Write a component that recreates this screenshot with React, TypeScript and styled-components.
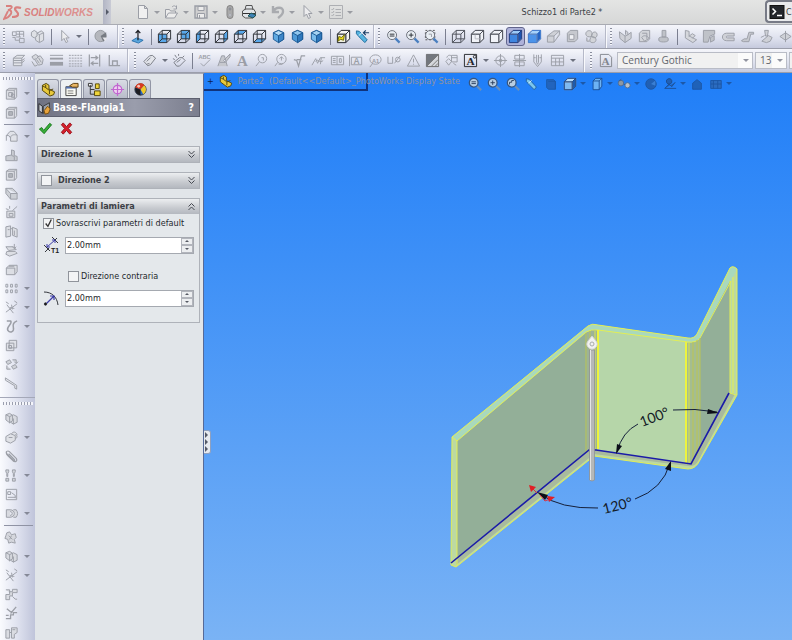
import React, { ReactNode } from "react";
import styled, { createGlobalStyle, css } from "styled-components";

const ui = `"DejaVu Sans Condensed", "DejaVu Sans", sans-serif`;

const GlobalStyle = createGlobalStyle`
  * { box-sizing: border-box; }
  body { margin: 0; font-family: ${ui}; font-size: 9px; color: #3c3f45; }
  button { font: inherit; color: inherit; padding: 0; border: 0; background: none; }
`;

/* ---------- glyphs ---------- */

const G = "#9b9ea6";
const D = "#2a2d33";

type Face = "front" | "back" | "left" | "right" | "top" | "bottom";
const facePaths: Record<Face, string> = {
  front: "M1.5 5.5h9v9h-9z",
  back: "M5.5 1.5h9v9h-9z",
  left: "M1.5 5.5l4-4v9l-4 4z",
  right: "M10.5 5.5l4-4v9l-4 4z",
  top: "M1.5 5.5l4-4h9l-4 4z",
  bottom: "M1.5 14.5l4-4h9l-4 4z",
};

const wireCube = (face?: Face, stroke = D) => (
  <>
    {face && <path d={facePaths[face]} fill="#5aa8ea" stroke="none" />}
    <path d="M1.5 5.5h9v9h-9zM1.5 5.5l4-4h9v9l-4 4M10.5 5.5l4-4M5.5 1.5v9h9M5.5 10.5l-4 4" stroke={stroke} />
  </>
);
const solidCube = (front: string, side: string, top: string, stroke: string) => (
  <>
    <path d={facePaths.front} fill={front} />
    <path d={facePaths.right} fill={side} />
    <path d={facePaths.top} fill={top} />
    <path d="M1.5 5.5h9v9h-9zM1.5 5.5l4-4h9v9l-4 4M10.5 5.5l4-4" stroke={stroke} />
  </>
);
const isoCube = (a: string, b: string, c: string) => (
  <g stroke="#1c5a94">
    <path d="M8 1.5l5.5 2.5v7L8 14.5 2.500 11V4z" fill={a} />
    <path d="M8 7v7.500l5.500-3.500V4z" fill={b} />
    <path d="M8 1.500L2.500 4 8 7l5.500-3z" fill={c} />
  </g>
);
const lens = (inner: ReactNode, stroke = "#666b75", handle = "#4a7fc0") => (
  <>
    <path d="M10 10l4.500 4.500" stroke={handle} strokeWidth="2.400" />
    <circle cx="6.500" cy="6.500" r="4.800" fill="#e9eef4" stroke={stroke} />
    {inner}
  </>
);
const hudLens = (inner: ReactNode) => (
  <>
    <path d="M10 10l5 5" stroke="#6b8fb8" strokeWidth="2.600" />
    <circle cx="6.500" cy="6.500" r="5" fill="#b7cde2" stroke="#37557e" strokeWidth="1.400" />
    {inner}
  </>
);

const glyphs: Record<string, ReactNode> = {
  doc: <path d="M3.500 1.500h6l3 3v10h-9zM9.500 1.500v3h3" fill="#f0f0f0" />,
  open: <path d="M1.500 14V5.500h4l1 1.500h5v2M1.500 14l3-5h9l-3 5zM8 3c2-2 4-1 4.500 1M12.500 1.500V5H9.500" fill="#ececec" />,
  save: <><path d="M2 2h12v12H2z" fill="#cfcfd0" strokeWidth="1.400" /><path d="M5 2.500h6v4H5zM4.500 9.500h7v4.500h-7zM6.500 11v3" fill="#ececec" /></>,
  capsule: <><rect x="5" y="1.500" width="6" height="13" rx="3" fill="#a9a9a9" stroke="#858585" /><circle cx="8" cy="5" r="1.200" fill="#777" /><circle cx="8" cy="11" r="1.200" fill="#eee" /></>,
  print: <><path d="M4 6l1-4.500h6L12 6M1.500 7l3-2h8l2 3v4l-3 2H4.500l-3-2z" fill="#e2e5e8" stroke="#555" /><path d="M2 9.500h12" stroke="#333" /><path d="M7 12l3-3 5 2-3 3z" fill="#3f83b8" stroke="#255" /></>,
  undo: <path d="M3 2v6h6M3.500 7.500c2-5 10-5 9.500 0 0 3-3 5-5 6.500" strokeWidth="2.400" stroke="#a9abaf" />,
  cursor: <path d="M5 1.500v11l2.500-2.500 2 4.500 2-1-2-4H13z" fill="#ececee" />,
  list: <path d="M1.500 1.500h13v13h-13zM3.500 5l1 1 1.500-2M7.500 5.500H13M3.500 8l1 1L6 7M7.500 8.500H13M3.500 11l1 1L6 10M7.500 11.500H13" stroke="#adafb3" />,
  sheet: <path d="M1.500 3h4v4h-4zM5.500 2.500h8v6M5.500 5.500h8M5.500 8.500h5M9 2.500v6M1.500 9h3v3h4M9 10h5v4.500H9z" />,
  cubes: <path d="M1.500 3.500l3-2 3 2v4l-3 2-3-2zM7.500 4.500L12 2l2.500 2v8L10 14.500 6 12V9M10 6v8M7.500 4.500L10 6l4.500-2" fill="#dfe1e6" />,
  ball: <><circle cx="7" cy="7.500" r="6" fill="#b5b7bd" stroke="#94979e" /><path d="M7 7.500l6-4v6l-3 4z" fill="#777b82" stroke="none" /><path d="M9 9h5l-2 4z" fill="#e6e6ea" stroke="none" /></>,
  normal: <><path d="M2 12.500l5-3 7 2.500-5 3z" fill="#5aa7df" stroke="#2b71ac" /><path d="M8.500 12V2M6 4.500L8.500 1.500 11 4.500" stroke="#1b1d22" strokeWidth="1.300" /></>,
  cFront: wireCube("front"), cBack: wireCube("back"), cLeft: wireCube("left"), cRight: wireCube("right"), cTop: wireCube("top"), cBottom: wireCube("bottom"),
  iso1: isoCube("#5fa9e2", "#3d86c8", "#b6dcf6"), iso2: isoCube("#4e9ad8", "#2f78bd", "#90c6ee"), iso3: isoCube("#7abceb", "#2f78bd", "#a5d2f1"),
  section: <>{solidCube("#f0efe0", "#f6f6f2", "#f6f6f2", D)}<path d="M2 13l1-5 3 1 3-3-1 6-3-1z" fill="#eedd1c" stroke="#6b6708" /></>,
  brush: <><path d="M1.500 2l3 .5 3 3 5.500 6-2.500 3-6-6-3-3.500z" fill="#57b4e0" stroke="#1d6b9c" /><path d="M4 7l3.500-3" stroke="#e3f3fb" /><path d="M15 4H9.500m2-2.500L9 4l2.500 2.500" stroke="#1c3f66" strokeWidth="1.300" /></>,
  hudBrush: <><path d="M1.500 2l3 .5 3 3 5.500 6-2.500 3-6-6-3-3.500z" fill="#7cc6ec" stroke="#1d5b9c" /><path d="M4 7l3.500-3" stroke="#e3f3fb" /></>,
  zoomFit: lens(<path d="M4 5.500h5M4 7.500h5" stroke={D} />),
  zoomIn: lens(<path d="M6.500 4v5M4 6.500h5" stroke={D} />),
  zoomArea: <><path d="M1.500 1.500h10v10h-10z" strokeDasharray="2 2" stroke="#555" />{lens(<path d="M5 5.500h3v3" stroke={G} />)}</>,
  hudFit: hudLens(<path d="M4 5.500h5M4 7.500h5" stroke="#273a57" />),
  hudZoom: hudLens(<path d="M6.500 4v5M4 6.500h5" stroke="#273a57" />),
  hudArea: hudLens(<path d="M4 8.500V6h2.500V4H9" stroke="#273a57" />),
  wire: wireCube(undefined, "#4b4e56"),
  hiddenGrey: <>{solidCube("#f1f3f8", "#f1f3f8", "#f1f3f8", "#4b4e56")}<path d="M5.500 6v4.500h5" stroke="#b6b9c1" /></>,
  hidden: solidCube("#f1f3f8", "#f1f3f8", "#f1f3f8", "#4b4e56"),
  shadedEdge: solidCube("#3f86e0", "#1d54b0", "#9bcaf8", "#173a86"),
  shaded: solidCube("#4b93ea", "#2464c4", "#a5d2fb", "#3a7ad4"),
  slab: <path d="M1.500 7.500h7v6.500h-7zM1.500 7.500l7-5.500h6l-6 5.500M14.500 2v4l-6 8" fill="#cfd1d7" />,
  boxGrey: <><path d="M2.500 4.500l3-3h8v9l-3 3h-8z" fill="#c6c8ce" /><path d="M4.500 6h5v5h-5z" fill="#f0f1f4" /></>,
  swirl: <path d="M8 8c-6 2-8-4-4-6 3-1 6 1 4 6zM8 8c0-6 6-6 6-2s-4 4-6 2zM8 8c6 0 6 6 2 6.500S5 12 8 8zM3 9v4h3" fill="#d2d4d9" />,
  leaf: <path d="M1.500 3l6 4.500v7L2 10zM7.500 14.500L14 10V3.500l-4 3-2.500 1M8 6V1.500l2.500 2v3" fill="#cfd1d7" />,
  shell: <path d="M2.500 4.500l3-3h8v9l-3 3h-8zM5.500 4.500h5v6M5 9c2-3 6-2 8 1l-5 3z" fill="#d3d5da" />,
  boss: <path d="M6.500 1.500h4v7h-4zM3 10c0-2 10-2 10 0v2c0 2.500-10 2.500-10 0z" fill="#bfc2c8" />,
  flange1: <path d="M2.500 1.500v8l8 5 4-3-8-4v-5zM6 8l4-3 3 2-3 3" fill="#d5d7dc" />,
  flange2: <path d="M1.500 1.500h12v4l-5 2-2 6.500h-5zM9 9l4-2v5l-4 2z" fill="#bfc2c8" />,
  hem: <path d="M14 4.500H6c-6 0-6 8 0 8h8v-3H7c-2 0-2-2 0-2h7z" fill="#cfd1d7" />,
  jog: <path d="M1.500 12.500l3-2h3l2-7h5v2h-3l-2 8h-6z" fill="#c6c8ce" />,
  form: <path d="M6 1.500h4l-1 6H7zM2 9l4-2M10 7l4 2-2 4-4 1.500L3 13z" fill="#cfd1d7" />,
  unfold: <path d="M2 8l6-4v8zM8 4l6 4-6 4M8 2v12" fill="#cfd1d7" />,
  stack: <path d="M2.500 5.500l4-3h8l-3 3v8h-9zM2.500 8h9l3-2M2.500 10.500h9l3-2.500M2.500 5.500h9" fill="#e1e3e8" />,
  edit: <path d="M2 4l4-2.500 3 2-2 2.500-3 1zM5 7l4 6 4-1 1-5-3-4-3 1M7 7l3 4M9 5l3 5M2 9l3 5 3-1" fill="#d6d8de" />,
  lineW: <><path d="M1 2.500h14" /><path d="M1 6h14" strokeWidth="2" /><path d="M1 11.500h14" strokeWidth="4" /></>,
  lineD: <path d="M1 2.500h14M1 5.500h14M1 8.500h14M1 11.500h14M1 14h14" strokeDasharray="2 1" />,
  align: <path d="M2.500 1.500v13M13.500 1.500v13M4 5h7M9 3l2.500 2L9 7M12 11H5M7 9l-2.500 2L7 13" strokeWidth="1.300" />,
  perp: <path d="M3.500 2v11.500H15M7 13V8.500h5V13" strokeWidth="1.400" />,
  tag: <path d="M2 9l6-6 3-.5 3.500 3L9 12.500l-3 1zM5 9l4-4M5 12l3-1" stroke="#777b83" fill="#e2e4ea" />,
  tag2: <path d="M2 10l6-5 3 0 3 3-6 6-3 0zM5 10l4-3M3 2l2 3M7 1l0 2M1 6l2 1M13 3l-2 2" stroke="#777b83" />,
  format: <path d="M2 14l4-11h3l3 11M4 10h6M15 1L8 8l2 2 5-6z" fill="#c6c8ce" />,
  balloon: <><circle cx="9" cy="6" r="4.500" /><path d="M6 9l-4 5M8 5h2v3" /></>,
  balloon2: <><circle cx="9" cy="6.500" r="5" /><path d="M5 10l-3 4M9 4v4M7 6l2-2 2 2M6 12h4" /></>,
  rough: <path d="M2 7l3 1 2 6 3-11h4M5 7h5" strokeWidth="1.300" />,
  weld: <path d="M1 13l4-7 2 5 3-6h5M5 9c3-4 4 3 8-1M11 5l-1 7" />,
  frame: <path d="M1.500 3.500h13v9h-13zM7.500 3.500v9M3 6h3M3 8h3M3 10h3M10 6h2v4h-2z" />,
  hole: <path d="M1 4v7h5V4M8 11l6-8M9 7a2.500 2.500 0 105 0 2.500 2.500 0 10-5 0" />,
  warn: <path d="M8 2l6.500 12h-13zM8 6v4M8 11.500v1" />,
  hatch: <><path d="M1.500 1.500h13v13h-13z" fill="#d4d6db" stroke="#666" /><path d="M1.500 14.500v-13h13z" fill="#73777e" stroke="none" /><path d="M2 14l12-12M7 14l7-7M11 14l3-3" stroke="#777" /></>,
  block: <path d="M2 9l3-3 3 3-3 4zM8 2.500h6v7H8zM8 5h6M3 5c1-3 3-3 5-2M10 11l3 2" />,
  target: <><circle cx="8" cy="8" r="5" /><path d="M8 1v14M1 8h14" /><circle cx="8" cy="8" r="1.500" /></>,
  centre: <path d="M3 2.500h10v4H3zM3 9.500h10v4H3zM1 8h14M8 1v14" />,
  clip: <path d="M3 1.500v8l4 5 4-5v-8M6 2v8l1 2 1-2V2M3 5h2M9 5h2" />,
  table: <path d="M1.500 2.500h13v11h-13zM1.500 5.500h13M1.500 9.500h13M6 5.500v8M10 5.500v8" />,
  fin: <path d="M2.500 4.500l3-2h8v9l-2 2.500h-9zM11 4.500l2-2M2.500 4.500H11V14M5 7h4v4H5zM8 8l3 1v3H8z" fill="#dcdee4" />,
  fin2: <><path d="M2.500 4.500l3-2h8v9l-2 2.500h-9zM11 4.500l2-2M2.500 4.500H11V14" fill="#dcdee4" /><path d="M5 7h4v4H5z" fill="#b2b5bc" /></>,
  round: <path d="M2.500 12.500V7l4-4.500h4l3.500 4v6.500h-7V9.500L5 7H2.500M7 9.500c0-3 3-4 7-3" fill="#e0e2e8" />,
  rib: <path d="M2 8.500l6-1V2l3 1v5l3 1v4.500H2zM8 8l3 1v4" fill="#c9ccd2" />,
  wedge: <path d="M2 2.500h7l5 5v6.500H7L2 8zM2 2.500l5 5.500h7M7 8v6" fill="#cdd0d6" />,
  wrench: <path d="M3 6.500h8.500v7H3zM5.500 9h4v3h-4zM9 6l5-4.500M2 4l3 1M6 1v3" fill="#dcdee4" />,
  doors: <path d="M2 3l5-1v11l-5 1zM9 3.500l5 2V14l-5-2zM7 5h2M4 6h2M11 7v5" fill="#dcdee4" />,
  chain: <path d="M2 4h8l3 3-8 1zM3 9h9l2 2-8 3-4-2zM11 1v5M9 4l2 2 2-2" fill="#dcdee4" />,
  pocket: <path d="M2.500 6.500l3-3H14v7l-2.500 3h-9zM2.500 6.500h9v7M5 4.500h6" fill="#dcdee4" />,
  pattern: <path d="M2 3.500h2v3H2zM7 3.500h2v3H7zM12 3.500h2v3h-2zM2 9.500h2v3H2zM7 9.500h2v3H7zM12 9.500h2v3h-2z" />,
  axis: <path d="M2 13L14 4M3 5l7 9M2 2l3 2M11 1l3 2M6 8l5 1M8 5l1 5" />,
  curve: <path d="M3 2h4c3 3-5 6-3 10 3 4 7 1 6-3s1-6 4-7" strokeWidth="1.600" />,
  copy: <path d="M5.500 2.500h8v8h-8zM2.500 5.500h8v8h-8zM5 8h3v3H5z" fill="#dfe1e7" />,
  move: <path d="M2 5l4-2 2 3-4 2zM8 10l4-2 2 3-4 2zM9 3h4v4M3 9v4h4M11 5l2 2 2-2" fill="#d0d3d9" />,
  ruler: <path d="M1.500 2l12 8v4l-2-1V10.500L1.500 4.500z" fill="#e4e6ec" />,
  asm: <path d="M2 4l4-1.500 3 2v6l-3 2-4-3zM6 6l4-2 4 2v6l-4 2-3-2M10 8v6M2 4l4 2v7" fill="#d8dae0" />,
  mate: <path d="M2 7l5-3 5 2v5l-5 3-5-2zM8 4c2-3 5-2 6 1M12 9c3 0 2-5 0-4M5 8h4" fill="#dfe1e6" />,
  paperclip: <path d="M3 3c-2 2 1 4 7 10 2 1 5 0 3-3L6 3C4 1 1 3 3 5l7 7c1 1 2 0 1-1L5 5" strokeWidth="1.200" />,
  fasten: <path d="M2 2h3v2l-1 2v3h-1V6L2 4zM9 2h3v2l-1 2v3h-1V6L9 4zM2 11h3v3H2zM9 11h3v3H9z" fill="#d0d3d9" />,
  pic: <path d="M2.500 2.500h11v11h-11zM4 11h8M4 5h3v3H4zM8 6l4 3v3" />,
  bool: <path d="M2.500 4v8h4c6 0 6-8 0-8zM6.500 6c3 0 3 4 0 4M10 4h3c2 3 2 5 0 8h-3" fill="#d8dae0" />,
  gear: <path d="M3 3l3-1 2 3 4-1 1 4-2 2 1 4-4-1-3 1-1-4-3-1 1-3zM5 6l4 4M8 6l-2 4" fill="#d5d7dd" />,
  steps: <path d="M2 13.500h4v-4h3V6h5V2.500H9V5H6v3H2zM2 3h4v3M9 10l3 3h2" fill="#dadce2" />,
  steps2: <path d="M2 13.500h5v-4h3V7h4M3 3l5 4M13 1L7 8M2 10h3" strokeWidth="1.400" />,
  steps3: <path d="M2 5h4v9H2zM8 3h6v5l-3 2v4H8zM6 8h2M9 5h3" fill="#dadce2" />,
  part: <g stroke="#4e4108"><path d="M1.500 3.500l4-2 3 2v4l6 3-1 3-4 1.500-8-6z" fill="#e8c83a" /><path d="M5 6l4 3 4-1.500M9 9v4M1.500 4L5 6V3" /></g>,
  property: <><path d="M2 5h11v9.500H2z" fill="#fbfbf4" stroke="#444" /><path d="M2 5h11v2H2z" fill="#5573b0" stroke="none" /><path d="M4 9.500h6M4 12h6" stroke="#777" /><path d="M6 4l4-2.500h5v4H9z" fill="#e9b765" stroke="#5a3c0d" /></>,
  config: <><path d="M3.500 3v10M3.500 8H8M3.500 13H8M1.500 1.500h4v3h-4z" stroke="#333" fill="#fff" /><path d="M9 2h4v5H9z" fill="#eed43a" stroke="#554708" /><path d="M8 9.500h6v5H8z" fill="#eed43a" stroke="#554708" /></>,
  dimx: <g stroke="#c266d0" strokeWidth="1.300"><circle cx="8" cy="8" r="4.500" fill="#efd3f2" /><path d="M8 1v14M1 8h14" /></g>,
  appearance: <><circle cx="8" cy="8" r="6" fill="#2b68c8" stroke="#333" /><path d="M8 8L2.500 6C3 1 10 0 12 3.500z" fill="#d93a1f" stroke="none" /><path d="M8 8l4-4.500c3 3 2 8-1 9.500z" fill="#f0c92a" stroke="none" /><path d="M8 8L2.500 6c-1 4 2 8 5.500 8z" fill="#1e1e22" stroke="none" /><circle cx="6" cy="4.500" r="1.500" fill="#fff" stroke="none" opacity=".7" /></>,
  baseFlange: <><path d="M1 3l4 3v8L1 11z" fill="#c3c8d0" stroke="#222" /><path d="M6 6l7-4v7l-7 5z" fill="#9aa0aa" stroke="#333" /><path d="M7 11l4-5 3 3-2 5-4 1z" fill="#e8a43c" stroke="#754908" /></>,
  ok: <path d="M1.500 8.500L4 7l2 3 6.500-7.500L14.500 4 6.500 13.500z" fill="#39b03a" stroke="#157519" />,
  cancel: <path d="M2.500 4l2-2L8 6l3.500-4 2 2L10 8l3.500 4-2 2L8 10l-3.500 4-2-2L6 8z" fill="#d6202c" stroke="#971019" />,
  terminal: <><rect x="1" y="1.500" width="14" height="13" fill="#23262b" stroke="#111" /><path d="M3.500 4.500l3 3-3 3M8 11.500h5" stroke="#fff" strokeWidth="1.500" /></>,
  hudSheet: <path d="M3 3h8l2 2v9H5l-2-2zM5 5h8v9" fill="#2264bd" stroke="#1d59a8" />,
  hudCube: solidCube("#7fb9f0", "#1d5cae", "#b9dcf8", "#123f80"),
  hudStyle: <path d="M3.500 4.500l3-3h7v9l-3 4h-7zM3.500 4.500h7v10M10.500 4.500l3-3" fill="#6cb2f4" stroke="#174a90" />,
  glasses: <><circle cx="4.500" cy="7" r="3.200" fill="#8d97a3" stroke="#4b6a94" /><circle cx="12" cy="9.500" r="3" fill="#b9c0c8" stroke="#4b6a94" /><path d="M7.500 8l2 1M2 4.500l3-2" stroke="#405c86" /></>,
  hudBall: <><circle cx="8" cy="8" r="6" fill="#2160b4" stroke="#1c55a2" /><path d="M8 8l5-4v6z" fill="#3a7fd4" stroke="none" /></>,
  hudScene: <path d="M2 13l5-5 3 3 4-5M2 13h13M4 6a3 3 0 106-2 3 3 0 00-6 2" fill="#2160b4" stroke="#1c4d90" />,
  hudHome: <path d="M3 7l5-4 5 4v7H3z" fill="#1f62b8" stroke="#1c55a2" />,
  hudView: <path d="M2 4h12v9H2zM5 4v9M10 4v9M2 8h12" fill="#2b6cc0" stroke="#1c55a2" />,
};

const textGlyphs: Record<string, { size: number; text: string; serif?: boolean; color?: string; extra?: string }> = {
  abc: { size: 6, text: "ABC", extra: "M4 11l3 3 7-7" },
  bigA: { size: 16, text: "A", serif: true },
  noteA: { size: 9, text: "A", extra: "M2.500 4.500h11v8h-11zM.5 2v12" },
  circA: { size: 6, text: "A1", extra: "M2 7a6 5 0 1012 0 6 5 0 10-12 0M5 11l-3 4" },
  boxA: { size: 12, text: "A", serif: true, color: "#24262b", extra: "M1.500 1.500h13v13h-13zM11 4a1.500 1.500 0 103 0 1.500 1.500 0 10-3 0" },
  fontA: { size: 12, text: "A", serif: true, color: "#83868e", extra: "M2.500 1.500h9l3 3v10h-12z" },
};

const Svg = styled.svg<{ $size?: number }>`
  display: block;
  flex: none;
  width: ${p => p.$size ?? 15}px;
  height: ${p => p.$size ?? 15}px;
`;

function Icon({ name, size }: { name: string; size?: number }) {
  const t = textGlyphs[name];
  return (
    <Svg $size={size} viewBox="0 0 16 16" fill="none" stroke={t?.color ?? G} strokeWidth="1" aria-hidden>
      {t ? (
        <>
          {t.extra && <path d={t.extra} />}
          <text x="8" y={name === "abc" ? 6 : 8 + t.size * 0.36} fontSize={t.size} fontWeight="bold" textAnchor="middle"
            fontFamily={t.serif ? "Liberation Serif, serif" : "Liberation Sans, sans-serif"} fill={t.color ?? G} stroke="none">{t.text}</text>
        </>
      ) : glyphs[name]}
    </Svg>
  );
}

/* ---------- toolbars ---------- */

const Page = styled.div`
  min-height: 100vh;
  display: flex;
  flex-direction: column;
  overflow: hidden;
  background: #d5d9e8;
`;
const TitleBar = styled.header`
  height: 25px;
  display: flex;
  align-items: center;
  background: linear-gradient(#e4e5e4, #d6d7d7);
  border-bottom: 1px solid #a9abb2;
  overflow: hidden;
`;
const Logo = styled.div`
  display: flex;
  align-items: center;
  gap: 2px;
  width: 103px;
  padding-left: 3px;
  font: italic bold 10px "Liberation Sans", sans-serif;
  color: #d9817f;
  span { color: #dc908e; }
`;
const MenuArrow = styled.button`
  width: 8px;
  height: 24px;
  flex: none;
  display: grid;
  place-items: center;
  background: linear-gradient(90deg, #b2b5c4, #c9cbd5);
  margin-right: 22px;
`;
const DocTitle = styled.h1`
  margin: 0 auto;
  padding-left: 4px;
  font-size: 9px;
  font-weight: normal;
  line-height: 12px;
  white-space: nowrap;
`;
const SearchBox = styled.label`
  align-self: stretch;
  display: flex;
  align-items: center;
  gap: 1px;
  width: 27px;
  padding-left: 2px;
  border: 2px solid #777a86;
  border-right: 0;
  border-radius: 4px 0 0 4px;
  background: #e9eaec;
  white-space: nowrap;
  margin-bottom: 1px;
`;
const ToolRow = styled.div`
  height: 24px;
  flex: none;
  display: flex;
  overflow: hidden;
  border-bottom: 1px solid #9b9eab;
  background: linear-gradient(#f5f6fb, #dde0ed 60%, #c6cadd);
`;
const Strip = styled.div<{ $vertical?: boolean; $end?: number; $start?: number }>`
  flex: none;
  display: flex;
  align-items: ${p => (p.$vertical ? "stretch" : "center")};
  ${p => p.$vertical
    ? css`flex-direction: column; padding-bottom: ${p.$end ?? 0}px; border-bottom: 1px solid #a4a8b8;`
    : css`padding-left: ${p.$start ?? 0}px; padding-right: ${p.$end ?? 0}px; border-right: 1px solid #f8f9fc; box-shadow: inset -1px 0 #b6b9c8;`}
`;
const Grip = styled.span<{ $vertical?: boolean }>`
  flex: none;
  ${p => p.$vertical
    ? css`height: 3px; margin: 4px 2px 4px 3px; background: repeating-linear-gradient(90deg, #9a9eae 0 1px, #f4f5fa 1px 3px);`
    : css`width: 2px; height: 17px; margin: 0 4px 0 3px; background: repeating-linear-gradient(#8a8e9e 0 1px, #f4f5fa 1px 3px);`}
`;
const Tool = styled.button<{ $selected?: boolean }>`
  flex: none;
  width: 19px;
  height: 19px;
  display: grid;
  place-items: center;
  ${p => p.$selected && css`background: #aeb2da; border: 1px solid #62658c; border-radius: 3px;`}
`;
const CaretButton = styled.button<{ $w?: number }>`
  flex: none;
  width: ${p => p.$w ?? 10}px;
  height: 19px;
  display: grid;
  place-items: center;
`;
const Triangle = styled.span<{ $color?: string; $dir?: "right" }>`
  width: 0;
  height: 0;
  border: 3px solid transparent;
  ${p => p.$dir === "right"
    ? css`border-left-color: ${p.$color ?? "#555a68"}; border-right-width: 0;`
    : css`border-top-color: ${p.$color ?? "#6d717e"}; border-bottom-width: 0;`}
`;
const Sep = styled.span<{ $vertical?: boolean; $size?: number }>`
  flex: none;
  ${p => p.$vertical
    ? css`height: 1px; margin: 2px 2px 2px 4px; background: #8f93a4;`
    : css`width: 1px; height: 16px; margin: 0 ${p.$size ?? 3}px 0 ${(p.$size ?? 3) + 1}px; background: #7b7f90;`}
`;

function Tools({ items, caret = 10, sep, selected, caretColor, size }: { items: string; caret?: number; sep?: number; selected?: string; caretColor?: string; size?: number }) {
  return (
    <>
      {items.split(" ").map((name, i) =>
        name === "|" ? <Sep key={i} $size={sep} />
          : name === "v" ? <CaretButton key={i} $w={caret} aria-label="Altre opzioni"><Triangle $color={caretColor} /></CaretButton>
            : <Tool key={i} aria-label={name} aria-pressed={name === selected} $selected={name === selected}><Icon name={name} size={size} /></Tool>
      )}
    </>
  );
}

const ComboBox = styled.div<{ $w: number }>`
  position: relative;
  flex: none;
  width: ${p => p.$w}px;
  margin-left: 2px;
  select {
    appearance: none;
    display: block;
    width: 100%;
    height: 17px;
    padding: 0 4px;
    border: 1px solid #b9bcc6;
    border-radius: 0;
    color: #63666d;
    background: linear-gradient(90deg, #f1f1f1 0 calc(100% - 14px), #fbfbfb 0);
    font: 10px/15px "Open Sans", sans-serif;
  }
  span {
    position: absolute;
    right: 4px;
    top: 7px;
    pointer-events: none;
  }
`;
const Combo = ({ label, width, value }: { label: string; width: number; value: string }) => (
  <ComboBox $w={width}>
    <select aria-label={label} defaultValue={value}><option value={value}>{value}</option></select>
    <Triangle $color="#9194a0" />
  </ComboBox>
);
const NextField = styled.input`
  flex: none;
  width: 32px;
  height: 17px;
  margin-left: 2px;
  border: 1px solid #b9bcc6;
  background: #f1f1f1;
`;

/* ---------- side toolbar ---------- */

const Body = styled.div`
  flex: 1;
  display: flex;
  min-height: 0;
`;
const SideBar = styled.nav`
  flex: none;
  width: 35px;
  height: calc(100vh - 73px);
  overflow: hidden;
  background: linear-gradient(90deg, #fafbfe, #dfe2ef 50%, #bfc4da);
`;
const SideRow = styled.div`
  display: flex;
  padding-left: 2px;
`;
function SideTools({ items }: { items: string }) {
  return (
    <>
      {items.split(" ").map((item, i) => {
        if (item === "|") return <Sep key={i} $vertical />;
        const [name, more] = item.split("+");
        return (
          <SideRow key={i}>
            <Tool aria-label={name}><Icon name={name} /></Tool>
            {more !== undefined && <CaretButton $w={12} aria-label="Altre opzioni"><Triangle $color="#858997" /></CaretButton>}
          </SideRow>
        );
      })}
    </>
  );
}

/* ---------- property panel ---------- */

const Panel = styled.aside`
  flex: none;
  width: 169px;
  padding: 5px 3px 0 2px;
  background: #e1e5e9;
  border-top: 1px solid #a6a9b5;
  border-right: 1px solid #566a98;
`;
const Tabs = styled.div`
  display: flex;
  gap: 1px;
`;
const Tab = styled.button<{ $active?: boolean }>`
  width: 22px;
  height: 19px;
  display: grid;
  place-items: center;
  border: 1px solid #9296a5;
  border-bottom: 0;
  border-radius: 3px 3px 0 0;
  background: ${p => (p.$active ? "#eef1f3" : "linear-gradient(#d9dce4, #b8bcc9)")};
`;
const Header = styled.div`
  height: 19px;
  display: flex;
  align-items: center;
  gap: 1px;
  padding: 0 5px 0 0;
  border: 1px solid #5d606f;
  background: linear-gradient(90deg, #6f7282, #9a9dac 60%, #7b7e8e);
  color: #fff;
  h2 { margin: 0; flex: 1; font-size: 10px; line-height: 14px; }
`;
const HelpButton = styled.button`
  && { font-size: 11px; font-weight: bold; }
`;
const Confirm = styled.div`
  display: flex;
  gap: 6px;
  padding: 4px 1px 10px;
  button { display: grid; place-items: center; }
`;
const Group = styled.section`
  margin: 0 0 9px;
  border: 1px solid #aeb2b9;
  background: #e4e8eb;
`;
const GroupHead = styled.div`
  display: flex;
  align-items: center;
  gap: 6px;
  height: 15px;
  padding: 0 3px;
  background: linear-gradient(#eceef0, #c7cacf 60%, #b4b8bf);
  h3 { margin: 0; flex: 1; font-size: 9px; line-height: 13px; }
`;
const Tick = styled.input`
  appearance: none;
  flex: none;
  width: 11px;
  height: 11px;
  margin: 0;
  border: 1px solid #90949b;
  background: #f3f4f5;
  &:checked {
    background: #f3f4f5 url("data:image/svg+xml,%3Csvg xmlns='http://www.w3.org/2000/svg' viewBox='0 0 8 8'%3E%3Cpath d='M1.500 4l2 2.500 3-6' fill='none' stroke='%23333' stroke-width='1.200'/%3E%3C/svg%3E");
  }
`;
const GroupBody = styled.div`
  padding: 2px 5px 14px;
`;
const CheckLine = styled.label<{ $indent?: boolean }>`
  display: flex;
  align-items: center;
  gap: 2px;
  height: 14px;
  margin-left: ${p => (p.$indent ? 25 : 0)}px;
  color: #25282d;
  white-space: nowrap;
`;
const ValueLine = styled.div`
  display: flex;
  align-items: center;
  gap: 5px;
  height: 20px;
  margin: 5px 0 14px;
  &:last-child { margin-bottom: 0; }
`;
const ParamIcon = styled.svg`
  flex: none;
  width: 17px;
  height: 18px;
`;
const Spin = styled.div`
  flex: 1;
  min-width: 0;
  display: flex;
  height: 17px;
  border: 1px solid #a5a9b0;
  background: #fff;
  input {
    flex: 1;
    min-width: 0;
    border: 0;
    padding: 0 1px;
    background: none;
    color: #25282d;
    font: 9px ${ui};
  }
`;
const SpinButtons = styled.div`
  flex: none;
  display: grid;
  width: 12px;
  button {
    display: grid;
    place-items: center;
    border: 1px solid #b2b5bc;
    background: #eceef0;
  }
`;

const Chevrons = ({ up }: { up?: boolean }) => (
  <Svg $size={9} viewBox="0 0 9 9" fill="none" stroke="#474a52" aria-hidden>
    <path d={up ? "M1.500 4.500l3-3 3 3M1.500 8l3-3 3 3" : "M1.500 1l3 3 3-3M1.500 4.500l3 3 3-3"} />
  </Svg>
);

const SpinField = ({ label }: { label: string }) => (
  <Spin>
    <input aria-label={label} defaultValue="2.00mm" />
    <SpinButtons>
      {["M0 3l2-2 2 2z", "M0 1l2 2 2-2z"].map((d, i) => (
        <button key={i} aria-label={i ? "Diminuisci" : "Aumenta"}>
          <svg width="4" height="4" viewBox="0 0 4 4"><path d={d} fill="#555962" /></svg>
        </button>
      ))}
    </SpinButtons>
  </Spin>
);

/* ---------- viewport ---------- */

const Viewport = styled.main`
  position: relative;
  flex: 1;
  min-width: 0;
  overflow: hidden;
  background: linear-gradient(#1f7ef8, #7ab3f5);
`;
const Scene = styled.svg`
  position: absolute;
  inset: 0;
  width: 100%;
  height: 100%;
`;
const AngleText = styled.text`
  font: 400 14px "Lato", "Open Sans", sans-serif;
  fill: #141a26;
`;
const Hud = styled.div`
  position: relative;
  display: flex;
  align-items: flex-start;
`;
const TreeRoot = styled.div`
  flex: none;
  width: 164px;
  height: 18px;
  display: flex;
  align-items: center;
  gap: 5px;
  padding-left: 3px;
  border-right: 2px solid #10337c;
  border-bottom: 2px solid #10337c;
  color: #8f93a0;
  white-space: pre;
  button { color: #0b2250; }
`;
const HudTools = styled.div`
  display: flex;
  margin: 1px 0 0 97px;
`;
const Handle = styled.button`
  position: absolute;
  left: -1px;
  top: calc(50% + 73px);
  width: 8px;
  height: 24px;
  display: grid;
  place-content: center;
  gap: 1px;
  background: #e7eaef;
  border: 1px solid #8ea0c0;
  border-left: 0;
  border-radius: 0 3px 3px 0;
`;

function Model() {
  return (
    <Scene viewBox="204 73 588 567" fill="none" role="img" aria-label="Base-Flangia1">
      <path d="M452 437L588 326Q592 323 598 325L688 338Q694 339 697 334L730 268Q733 265 737 269L737 395L700 460Q696 469 688 469L594 456L456 567L451 565Z" fill="#bcd9a2" />
      <path d="M452 437L588 326Q592 323 598 325L688 338Q694 339 697 334L730 268Q733 265 737 269L731 281L700 338Q696 343 688 342L598 330Q591 329 586 332L457 441Z" fill="#a9d9bc" />
      <path d="M457 441L587 332V452L457 559Z" fill="#93af98" />
      <path d="M587 332Q591 329 597 330V450L587 452Z" fill="#9db396" />
      <path d="M597 330L685 342V463L597 450Z" fill="#b6d6a9" />
      <path d="M685 342Q693 344 700 338V452L691 464L685 463Z" fill="#a4bd91" />
      <path d="M700 338L730 281V393L700 448Z" fill="#93af98" />
      <path d="M457 559L589 450L597 450L691 464L729 393L735 394L698 461Q695 467 688 466L594 454L456 565Z" fill="#a8ba9d" />
      <g stroke="#e3ee55">
        <path d="M452 437L588 326Q592 323 598 325L688 338Q694 339 697 334L730 268Q733 265 737 269L737 395L700 460Q696 469 688 469L594 456L456 567L451 565ZM452 437L457 441V566M457 441L586 332Q591 329 598 330L688 342Q696 343 700 338L731 281M730 281V393L736 395M733 277V393" />
        <path d="M586 333V452M590 331V450M697 340V456M700 338V451M693 342V463" stroke="#bcc552" />
        <path d="M598 330V449M686 342V463" stroke="#eef43c" strokeWidth="2" />
        <path d="M595 331V449M689 342V463" stroke="#dbe34e" />
      </g>
      <path d="M451 563L589 450H596L691 464L729 393" stroke="#1b1ba8" strokeWidth="1.600" />
      <path d="M589.500 350H594.500V480Q592 482 589.500 480Z" fill="#b6b8b8" stroke="#8d9296" strokeWidth=".8" />
      <path d="M590.500 350V480" stroke="#e4e4e4" />
      <path d="M592 336l4 5a5 5 0 11-8 0z" fill="#f2f2f0" stroke="#d2d4d2" />
      <circle cx="592" cy="344" r="2" stroke="#a9acab" />
      <g stroke="#15203a" strokeWidth="1">
        <path d="M617 452Q622 432 638 424M673 410Q695 408 717 412" />
        <path d="M540 494Q560 509 598 508M635 499Q663 489 670 463" />
      </g>
      <path d="M616 454L617 444L622 446ZM719 413L707 414L708 409ZM671 461L671 471L665 469ZM537 492L548 495L545 500Z" fill="#0c0f18" />
      <AngleText transform="translate(642 427) rotate(-21)">100°</AngleText>
      <AngleText transform="translate(604 514) rotate(-14)">120°</AngleText>
      <path d="M537 493L532 488M540 495L545 501L550 499" stroke="#d43445" />
      <path d="M529 485L536 487L531 492ZM555 497L547 496L549 502Z" fill="#e01f25" />
    </Scene>
  );
}

export default function App() {
  return (
    <Page>
      <GlobalStyle />
      <TitleBar>
        <Logo>
          <svg width="19" height="17" viewBox="0 0 19 17" fill="none" stroke="#d9817f" strokeWidth="1.800" aria-hidden>
            <path d="M3 2h5c2 1 0 3-3 4 4 0 4 3 2 5-1 2-3 3-6 4l4-8" />
            <path d="M18 4c-3-1-6-1-6 1s4 3 3 6c-1 2-4 2-6 2" strokeWidth="2.200" />
          </svg>
          <div>SOLID<span>WORKS</span></div>
        </Logo>
        <MenuArrow aria-label="Menu"><Triangle $dir="right" /></MenuArrow>
        <Tools items="doc v open v save v capsule print v undo v cursor v list v" caretColor="#9a9ca2" size={16} />
        <DocTitle>Schizzo1 di Parte2 *</DocTitle>
        <SearchBox><Icon name="terminal" size={16} />C</SearchBox>
      </TitleBar>

      <ToolRow>
        <Strip $end={7}><Grip /><Tools items="sheet cubes | cursor v | ball" /></Strip>
        <Strip $end={2}><Grip /><Tools items="normal | cFront cBack cLeft cRight cTop cBottom iso1 iso2 iso3 | section brush" /></Strip>
        <Strip $end={5}><Grip /><Tools items="zoomFit zoomIn zoomArea | wire hiddenGrey hidden shadedEdge shaded slab boxGrey swirl" selected="shadedEdge" /></Strip>
        <Strip><Grip /><Tools items="leaf shell boss | flange1 flange2 hem jog form unfold" /></Strip>
      </ToolRow>
      <ToolRow>
        <Strip $end={5}><Grip /><Tools items="stack edit lineW lineD align perp" /></Strip>
        <Strip $start={2} $end={6}><Grip /><Tools items="tag v tag2 | abc format bigA balloon balloon2 rough weld frame noteA circA hole warn hatch block boxA v target centre clip table v" caret={11} sep={2} /></Strip>
        <Strip $start={2}>
          <Grip />
          <Tools items="fontA" />
          <Combo width={136} label="Carattere" value="Century Gothic" />
          <Combo width={32} label="Dimensione" value="13" />
          <NextField aria-label="Altezza" />
        </Strip>
      </ToolRow>

      <Body>
        <SideBar>
          <Strip $vertical $end={4}>
            <Grip $vertical />
            <SideTools items="fin+ fin2+ | round+ rib fin2 wedge wrench doors chain pocket pattern+ axis+ curve+ copy move ruler" />
          </Strip>
          <Strip $vertical>
            <Grip $vertical />
            <SideTools items="asm mate+ paperclip fasten+ pic bool+ | gear asm+ axis+ steps steps2 steps3" />
          </Strip>
        </SideBar>

        <Panel>
          <Tabs role="tablist">
            {["part", "property", "config", "dimx", "appearance"].map(n => (
              <Tab key={n} role="tab" aria-label={n} aria-selected={n === "property"} $active={n === "property"}><Icon name={n} size={15} /></Tab>
            ))}
          </Tabs>
          <Header>
            <Icon name="baseFlange" size={14} />
            <h2>Base-Flangia1</h2>
            <HelpButton aria-label="Guida">?</HelpButton>
          </Header>
          <Confirm>
            <button aria-label="OK"><Icon name="ok" size={15} /></button>
            <button aria-label="Annulla"><Icon name="cancel" size={15} /></button>
          </Confirm>
          <Group><GroupHead><h3>Direzione 1</h3><Chevrons /></GroupHead></Group>
          <Group><GroupHead><Tick type="checkbox" id="dir2" /><h3><label htmlFor="dir2">Direzione 2</label></h3><Chevrons /></GroupHead></Group>
          <Group>
            <GroupHead><h3>Parametri di lamiera</h3><Chevrons up /></GroupHead>
            <GroupBody>
              <CheckLine><Tick type="checkbox" defaultChecked />Sovrascrivi parametri di default</CheckLine>
              <ValueLine>
                <ParamIcon viewBox="0 0 17 18" fill="none" stroke="#33363c" aria-hidden>
                  <path d="M1 9l6 6M9 1l6 6M2 16l4-4M11 5l3-3" />
                  <path d="M4 11l8-7M4 8v3h3M9 4h3v3" stroke="#3c3ca8" />
                  <text x="8" y="17" fontSize="7" fontWeight="bold" fontFamily="Liberation Sans, sans-serif" fill="#222" stroke="none">T1</text>
                </ParamIcon>
                <SpinField label="Spessore" />
              </ValueLine>
              <CheckLine $indent><Tick type="checkbox" />Direzione contraria</CheckLine>
              <ValueLine>
                <ParamIcon viewBox="0 0 17 18" fill="none" stroke="#33363c" aria-hidden>
                  <path d="M1 3c8 0 13 5 14 13" />
                  <path d="M3 15l8-8M7 7h4v4" stroke="#3c3ca8" strokeWidth="1.200" />
                  <circle cx="2.500" cy="15" r="1.200" fill="#111" />
                </ParamIcon>
                <SpinField label="Raggio di piegatura" />
              </ValueLine>
            </GroupBody>
          </Group>
        </Panel>

        <Viewport>
          <Model />
          <Hud>
            <TreeRoot><button aria-label="Espandi">+</button><Icon name="part" size={14} /><span>Parte2  (Default&lt;&lt;Default&gt;_PhotoWorks Display State</span></TreeRoot>
            <HudTools>
              <Tools items="hudFit hudZoom hudArea hudBrush hudSheet hudCube v hudStyle v glasses v hudBall hudScene v hudHome hudView v" caret={8} caretColor="#1c58a8" size={14} />
            </HudTools>
          </Hud>
          <Handle aria-label="Comprimi pannello"><Triangle $dir="right" /><Triangle $dir="right" /><Triangle $dir="right" /></Handle>
        </Viewport>
      </Body>
    </Page>
  );
}
